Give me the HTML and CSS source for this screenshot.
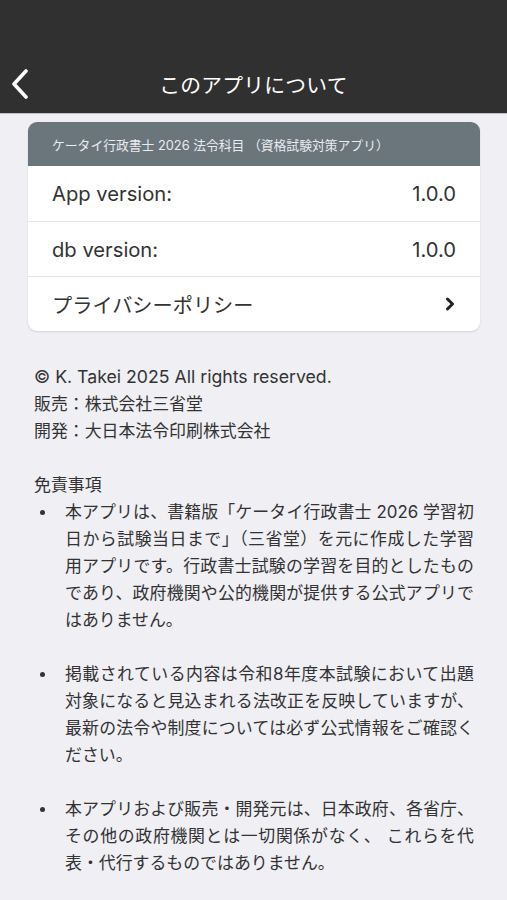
FILE: index.html
```html
<!DOCTYPE html>
<html lang="ja">
<head>
<meta charset="utf-8">
<title>このアプリについて</title>
<link rel="stylesheet" href="styles.css">
</head>
<body>
<header class="navbar">
  <div class="nav-row">
    <button class="back" aria-label="戻る">
      <svg width="22" height="30" viewBox="0 0 22 30"><polyline points="16,2 4,15 16,28" fill="none" stroke="#fff" stroke-width="3.6" stroke-linecap="round" stroke-linejoin="round"/></svg>
    </button>
    <h1 class="title">このアプリについて</h1>
  </div>
</header>
<main class="content">
  <section class="card">
    <div class="card-head">ケータイ行政書士 2026 法令科目 （資格試験対策アプリ）</div>
    <div class="row"><span>App version:</span><span>1.0.0</span></div>
    <div class="row"><span>db version:</span><span>1.0.0</span></div>
    <div class="row"><span>プライバシーポリシー</span>
      <svg class="chev" width="10" height="14" viewBox="0 0 10 14"><polyline points="2.5,2 7.5,7 2.5,12" fill="none" stroke="#222" stroke-width="3" stroke-linecap="round" stroke-linejoin="round"/></svg>
    </div>
  </section>
  <section class="info">
    <p><span class="latin">© K. Takei 2025 All rights reserved.</span><br>販売：株式会社三省堂<br>開発：大日本法令印刷株式会社</p>
    <p class="head">免責事項</p>
    <ul class="notes">
      <li><span class="dot"></span><span class="txt">本アプリは、書籍版「ケータイ行政書士 2026 学習初日から試験当日まで」（三省堂）を元に作成した学習用アプリです。行政書士試験の学習を目的としたものであり、政府機関や公的機関が提供する公式アプリではありません。</span></li>
      <li><span class="dot"></span><span class="txt">掲載されている内容は令和8年度本試験において出題対象になると見込まれる法改正を反映していますが、最新の法令や制度については必ず公式情報をご確認ください。</span></li>
      <li><span class="dot"></span><span class="txt">本アプリおよび販売・開発元は、日本政府、各省庁、その他の政府機関とは一切関係がなく、 これらを代表・代行するものではありません。</span></li>
    </ul>
  </section>
</main>
</body>
</html>
```
FILE: styles.css
```css
* { box-sizing: border-box; }
html, body { margin: 0; padding: 0; }
body {
  background: #efeff4;
  font-family: "Inter", "Noto Sans CJK JP", sans-serif;
  color: #333;
  width: 507px;
  min-height: 900px;
}
.navbar {
  background: #303030;
  height: 114px;
  padding-top: 55px;
  border-bottom: 1px solid #bfbfc3;
}
.nav-row {
  position: relative;
  height: 57px;
  display: flex;
  align-items: center;
  justify-content: center;
}
.back {
  position: absolute;
  left: 10px;
  top: 14px;
  background: none;
  border: 0;
  padding: 0;
  display: flex;
}
.title {
  margin: 0;
  font-size: 20.8px;
  font-weight: 400;
  color: #fff;
  letter-spacing: 0.2px;
}
.content { padding: 8px 0 0; }
.card {
  margin: 0 27px 0 28px;
  background: #fff;
  border-radius: 9px;
  overflow: hidden;
  box-shadow: 0 1px 2px rgba(0,0,0,0.12);
}
.card-head {
  height: 44px;
  background: #6b757c;
  color: #e9ecef;
  font-size: 12.8px;
  display: flex;
  align-items: center;
  padding-left: 24px;
}
.row {
  height: 55px;
  display: flex;
  align-items: center;
  justify-content: space-between;
  padding: 0 24px 0 24px;
  font-size: 20.2px;
  color: #333;
  border-top: 1px solid #e4e4e7;
}
.row:nth-child(2) { border-top: 0; }
.chev { margin-right: 1px; }
.info {
  padding: 32px 33px 0 34px;
  font-size: 16.9px;
  line-height: 27px;
  color: #333;
}
.latin { font-size: 17.7px; }
.info p { margin: 0 0 27px; }
.info p.head { margin: 0; }
.notes {
  list-style: none;
  margin: 0;
  padding: 0;
}
.notes li {
  display: flex;
  margin-bottom: 27px;
}
.dot {
  flex: 0 0 auto;
  width: 5px;
  height: 5px;
  border-radius: 50%;
  background: #333;
  margin: 11px 20px 0 6px;
}
.txt {
  width: 410px;
  text-align: justify;
}
```
